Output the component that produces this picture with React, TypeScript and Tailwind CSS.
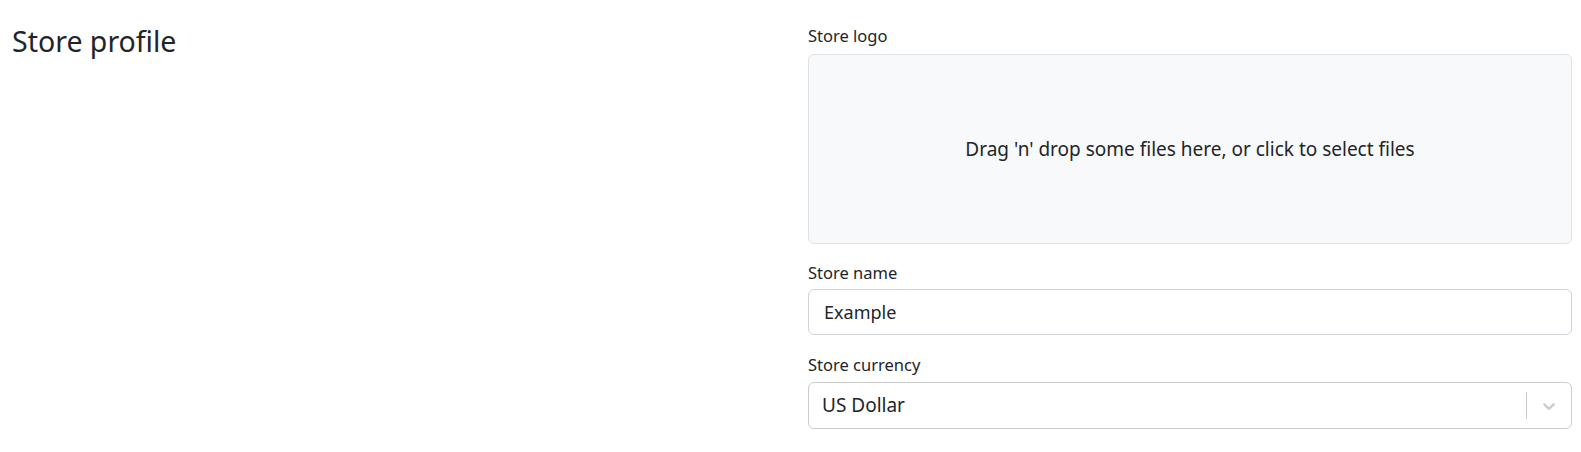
import React, { useState } from "react";

const font = { fontFamily: '"Noto Sans", "Open Sans", sans-serif' };

const ChevronDown = () => (
  <svg viewBox="0 0 20 20" width="20" height="20" className="fill-[#cccccc]">
    <path d="M4.516 7.548c0.436-0.446 1.043-0.481 1.576 0l3.908 3.747 3.908-3.747c0.533-0.481 1.141-0.446 1.574 0 0.436 0.445 0.408 1.197 0 1.615-0.406 0.418-4.695 4.502-4.695 4.502-0.217 0.223-0.502 0.335-0.787 0.335s-0.57-0.112-0.789-0.335c0 0-4.287-4.084-4.695-4.502s-0.436-1.17 0-1.615z" />
  </svg>
);

export default function App() {
  const [name, setName] = useState("Example");

  return (
    <div className="h-[452px] overflow-hidden bg-white text-[#212529]" style={font}>
      <div className="flex pt-[24px]">
        <div className="w-[808px] shrink-0 pl-[12px]">
          <h3 className="text-[28.5px] leading-[1.2] font-normal">Store profile</h3>
        </div>

        <div className="w-[764px] shrink-0 flex flex-col">
          <label className="text-[16.5px] leading-6 mb-[6px]">Store logo</label>
          <div className="h-[190px] rounded-md border border-[#dee2e6] bg-[#f8f9fa] flex items-center justify-center cursor-pointer">
            <p className="text-[19px]">Drag 'n' drop some files here, or click to select files</p>
          </div>

          <label className="text-[16.5px] leading-6 mt-[17px] mb-[4px]">Store name</label>
          <input
            value={name}
            onChange={(e) => setName(e.target.value)}
            className="h-[46px] rounded-md border border-[#ced4da] px-[15px] text-[18px] outline-none"
          />

          <label className="text-[16.5px] leading-6 mt-[18px] mb-[5px]">Store currency</label>
          <div className="h-[47px] rounded-md border border-[#cccccc] flex items-center">
            <div className="flex-1 pl-[13px] text-[19px]">US Dollar</div>
            <div className="flex items-center self-stretch py-[9px]">
              <span className="w-px self-stretch bg-[#cccccc]" />
              <span className="px-[12px]">
                <ChevronDown />
              </span>
            </div>
          </div>
        </div>
      </div>
    </div>
  );
}
